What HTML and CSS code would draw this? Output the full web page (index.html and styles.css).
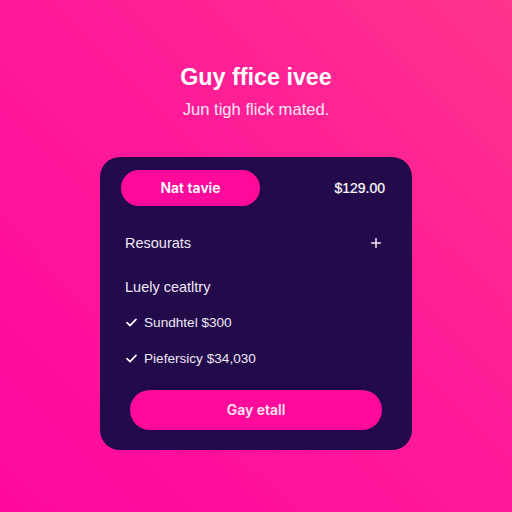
FILE: index.html
```html
<!DOCTYPE html>
<html lang="en">

<head>
  <meta charset="utf-8" />
  <meta name="viewport" content="width=device-width, initial-scale=1" />
  <title>Guy ffice ivee</title>
  <link rel="stylesheet" href="styles.css">
</head>

<body>
  <div class="page">
    <h1 class="title">Guy ffice ivee</h1>
    <p class="subtitle">Jun tigh flick mated.</p>

    <div class="card">
      <div class="card-head">
        <button class="pill">Nat tavie</button>
        <span class="price">$129.00</span>
      </div>

      <div class="row row-toggle">
        <span>Resourats</span>
        <svg class="plus" width="10" height="10" viewBox="0 0 10 10">
          <path d="M5 0.5v9M0.5 5h9" stroke="currentColor" stroke-width="1.5" stroke-linecap="round" />
        </svg>
      </div>

      <div class="row row-label">Luely ceatltry</div>

      <ul class="features">
        <li>
          <svg class="check" width="11" height="9" viewBox="0 0 11 9">
            <path d="M1 4.6l3 3L10 1.4" fill="none" stroke="currentColor" stroke-width="1.6" stroke-linecap="round" stroke-linejoin="round" />
          </svg>
          Sundhtel $300
        </li>
        <li>
          <svg class="check" width="11" height="9" viewBox="0 0 11 9">
            <path d="M1 4.6l3 3L10 1.4" fill="none" stroke="currentColor" stroke-width="1.6" stroke-linecap="round" stroke-linejoin="round" />
          </svg>
          Piefersicy $34,030
        </li>
      </ul>

      <button class="cta">Gay etall</button>
    </div>
  </div>
</body>

</html>
```

FILE: styles.css
```css
:root {
  --pink: #ff0a9a;
  --card: #230a4b;
  --ink: #efe8f7;
  --sans: "Liberation Sans", Arial, sans-serif;
  --ui: Inter, "Liberation Sans", sans-serif;
}

html,
body {
  height: 100%;
  margin: 0;
}

body {
  background: linear-gradient(to bottom left, #ff348c 0%, #ff1a98 45%, #ff08a0 100%);
  font-family: var(--sans);
  color: white;
}

.page {
  display: flex;
  flex-direction: column;
  align-items: center;
  padding-top: 60px;
}

.title {
  margin: 0;
  font-size: 23.3px;
  line-height: 34px;
  font-weight: 700;
}

.subtitle {
  margin: 6px 0 0;
  font-size: 16.6px;
  line-height: 20px;
  color: #ffe8f4;
}

.card {
  box-sizing: border-box;
  width: 312px;
  height: 293px;
  margin-top: 37px;
  padding: 13px 27px 20px 21px;
  border-radius: 20px;
  background: var(--card);
  color: var(--ink);
  display: flex;
  flex-direction: column;
}

.card-head {
  display: flex;
  justify-content: space-between;
  align-items: center;
}

/* buttons use the UI face for its heavier weights */
.pill {
  width: 139px;
  height: 36px;
  border: 0;
  border-radius: 18px;
  background: var(--pink);
  color: white;
  font: 600 14px/1 var(--ui);
}

.price {
  font-size: 14px;
  color: white;
  -webkit-text-stroke: 0.2px white;
}

.row {
  display: flex;
  align-items: center;
  height: 20px;
  padding-left: 4px;
  font-size: 14.5px;
}

.row-toggle {
  justify-content: space-between;
  margin-top: 27px;
  padding-right: 4px;
}

.row-label {
  margin-top: 24px;
}

.features {
  list-style: none;
  margin: 15px 0 0;
  padding: 0 0 0 5px;
  display: flex;
  flex-direction: column;
  gap: 16px;
}

.features li {
  display: flex;
  align-items: center;
  gap: 7px;
  height: 20px;
  font-size: 13.6px;
}

.check {
  color: white;
}

.cta {
  height: 40px;
  margin: 22px 3px 0 9px;
  border: 0;
  border-radius: 20px;
  background: var(--pink);
  color: #ffe6f3;
  font: 600 14px/1 var(--ui);
}
```
